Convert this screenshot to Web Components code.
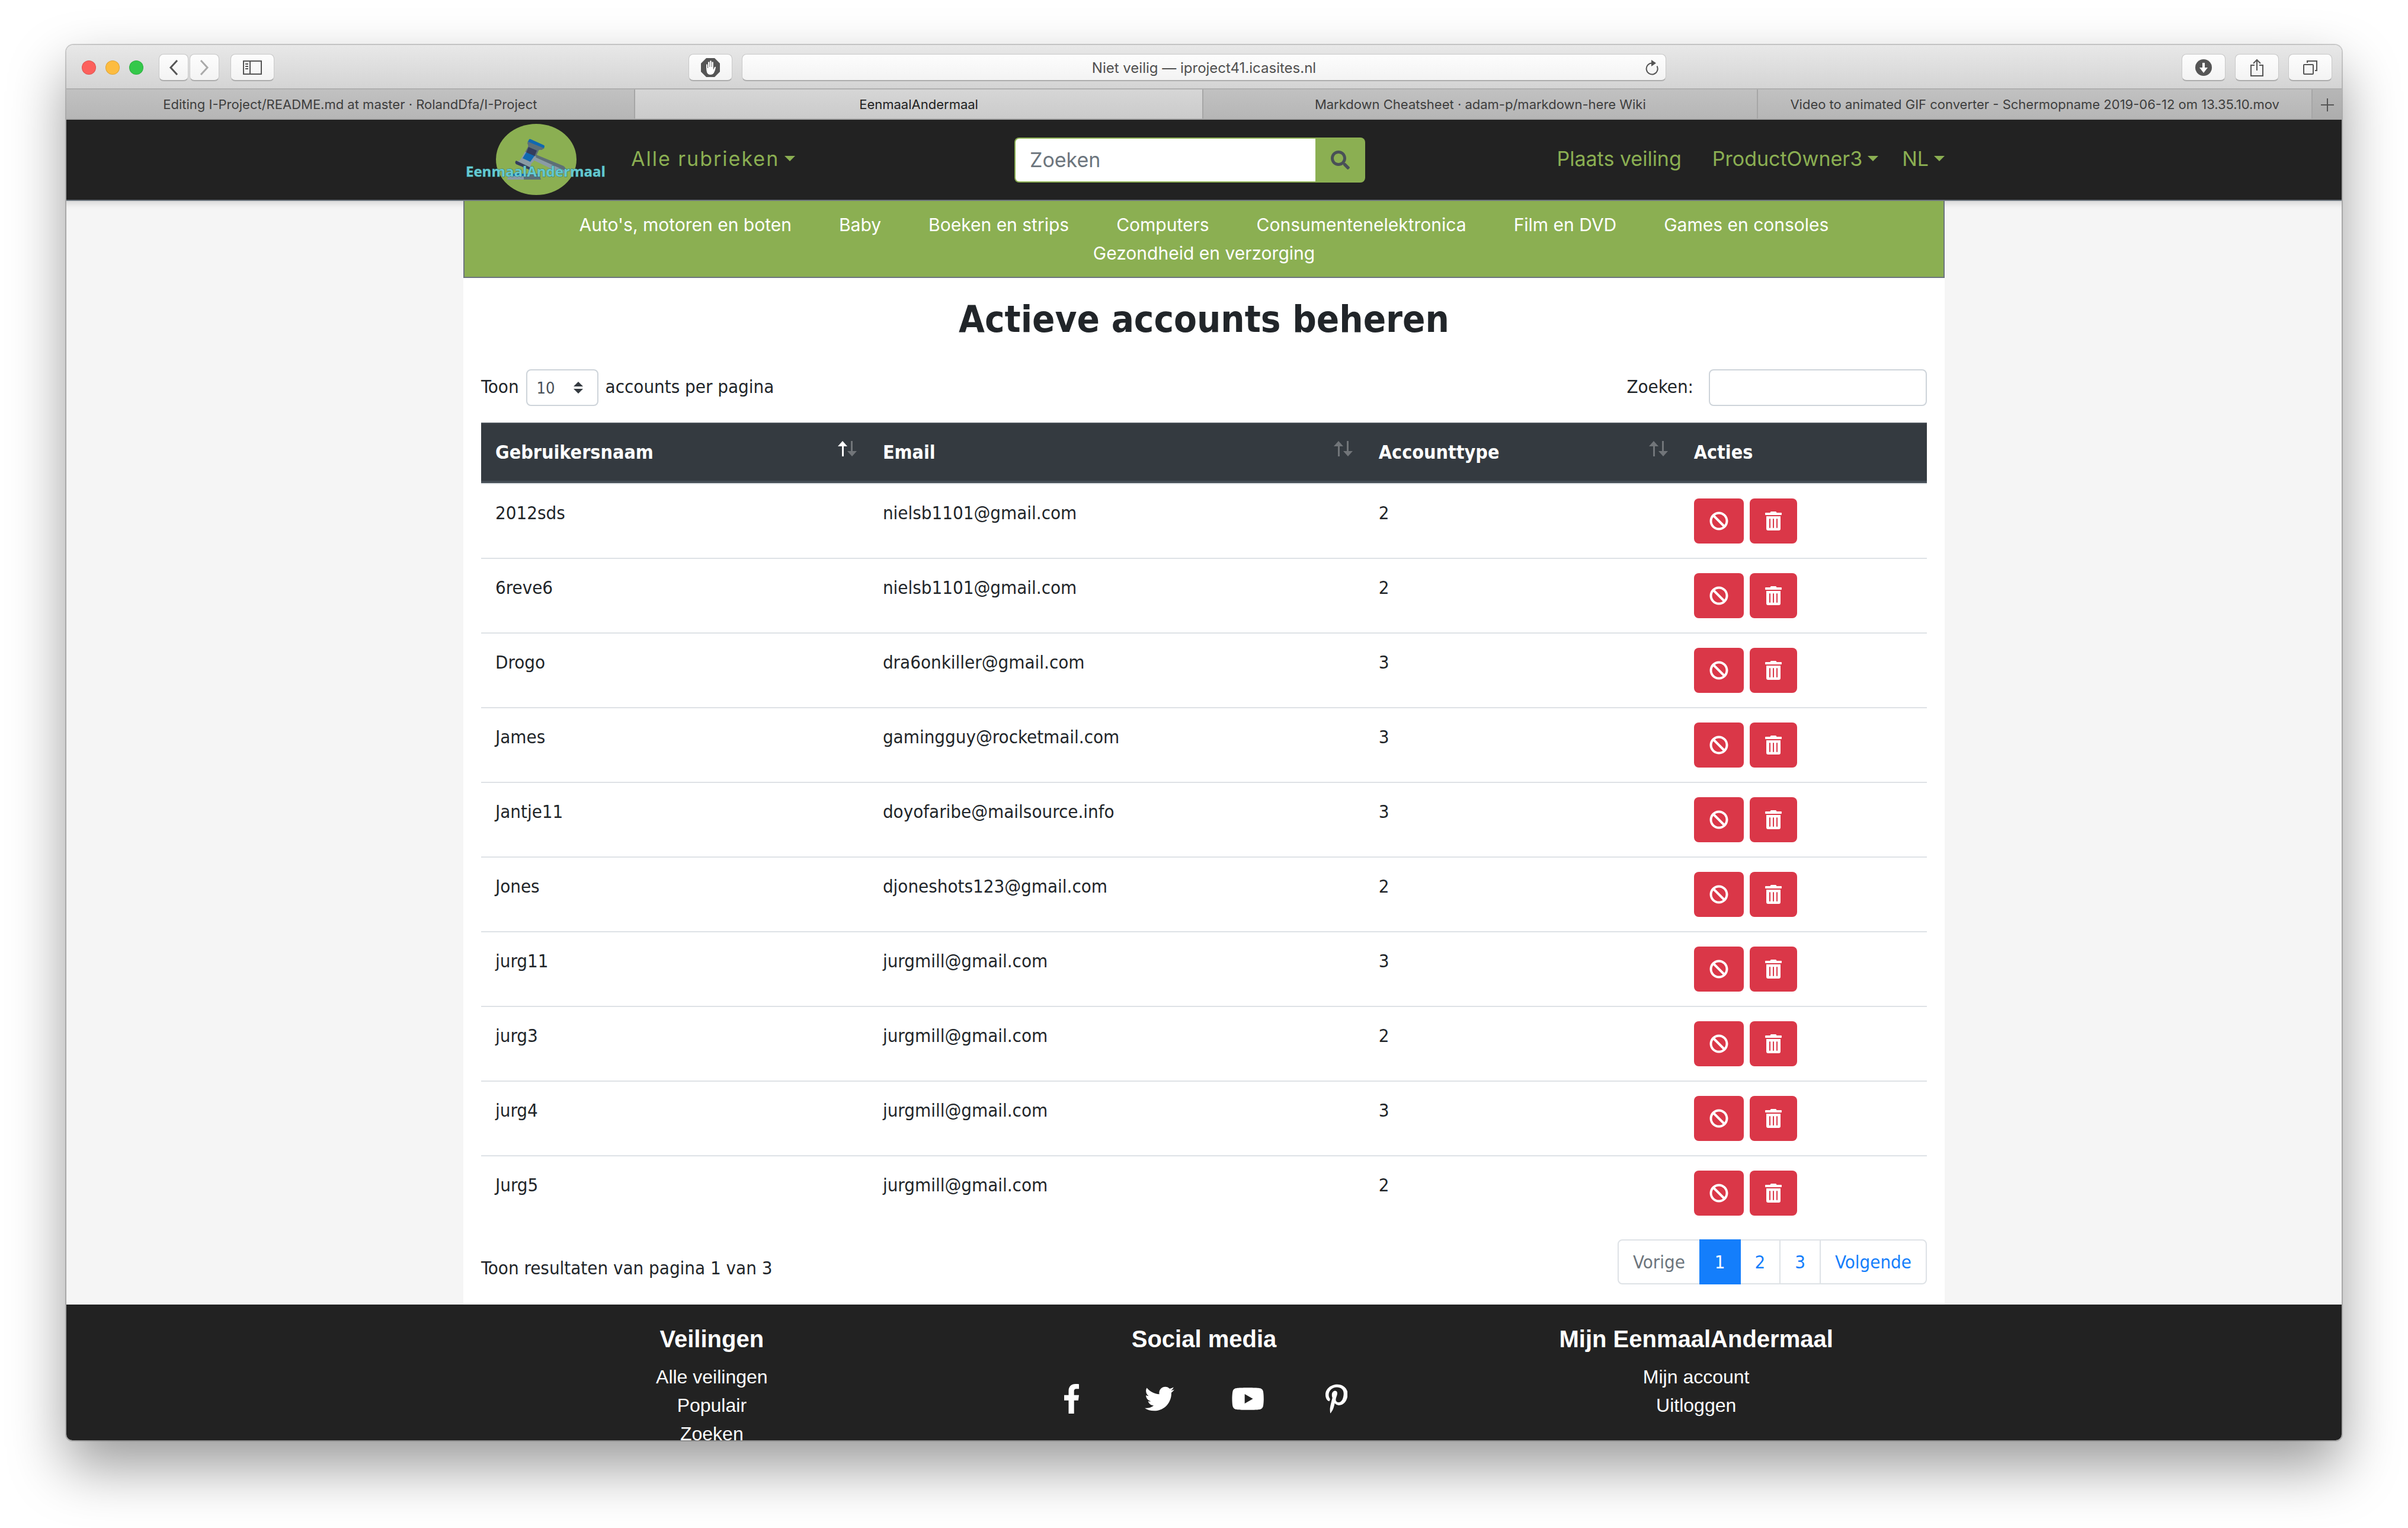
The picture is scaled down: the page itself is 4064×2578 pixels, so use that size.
<!DOCTYPE html>
<html lang="nl">
<head>
<meta charset="utf-8">
<meta name="viewport" content="width=device-width, initial-scale=1">
<title>EenmaalAndermaal</title>
<style>
  html, body { margin: 0; height: 100%; }
  body {
    box-sizing: border-box;
    display: flex;
    padding: 76px 112px 148px;
    background: #fff;
    color: #212529;
    font: 31px/48px "DejaVu Sans Condensed", "DejaVu Sans", sans-serif;
    --green: #8baf52;
    --dark: #222;
    --line: #dee2e6;
    --slate: #6c757d;
    --ui: Inter, "Open Sans", sans-serif;
  }
</style>
</head>
<body>
<browser-window>
  <browser-toolbar slot="chrome"></browser-toolbar>
  <browser-tabs slot="chrome"></browser-tabs>
  <site-header></site-header>
  <site-page>
    <rubric-nav></rubric-nav>
    <accounts-panel>
      <span slot="title">Actieve accounts beheren</span>
    </accounts-panel>
  </site-page>
  <site-footer></site-footer>
</browser-window>

<script>
const define = (name, html, setup) => {
  const template = document.createElement('template');
  template.innerHTML = html;
  customElements.define(name, class extends HTMLElement {
    constructor() {
      super();
      this.attachShadow({ mode: 'open' }).append(template.content.cloneNode(true));
      if (setup) setup(this, this.shadowRoot);
    }
  });
};

const ICONS = {
  ban: [512, 512, 'M256 8C119.034 8 8 119.033 8 256s111.034 248 248 248 248-111.034 248-248S392.967 8 256 8zm130.108 117.892c65.448 65.448 70 165.481 20.677 235.637L150.47 105.216c70.204-49.356 170.226-44.735 235.638 20.676zM125.892 386.108c-65.448-65.448-70-165.481-20.677-235.637L361.53 406.784c-70.203 49.356-170.226 44.736-235.638-20.676z'],
  trash: [448, 512, 'M32 464a48 48 0 0 0 48 48h288a48 48 0 0 0 48-48V128H32zm272-256a16 16 0 0 1 32 0v224a16 16 0 0 1-32 0zm-96 0a16 16 0 0 1 32 0v224a16 16 0 0 1-32 0zm-96 0a16 16 0 0 1 32 0v224a16 16 0 0 1-32 0zM432 32H312l-9.4-18.7A24 24 0 0 0 281.1 0H166.8a23.72 23.72 0 0 0-21.4 13.3L136 32H16A16 16 0 0 0 0 48v32a16 16 0 0 0 16 16h416a16 16 0 0 0 16-16V48a16 16 0 0 0-16-16z'],
  search: [512, 512, 'M505 442.7L405.3 343c-4.5-4.5-10.6-7-17-7H372c27.6-35.3 44-79.7 44-128C416 93.1 322.9 0 208 0S0 93.1 0 208s93.1 208 208 208c48.3 0 92.7-16.4 128-44v16.3c0 6.4 2.5 12.5 7 17l99.7 99.7c9.4 9.4 24.6 9.4 33.9 0l28.3-28.3c9.4-9.4 9.4-24.6.1-34zM208 336c-70.7 0-128-57.2-128-128 0-70.7 57.2-128 128-128 70.7 0 128 57.2 128 128 0 70.7-57.2 128-128 128z'],
  facebook: [264, 512, 'M215.8 85H264V3.6C255.7 2.5 227.1 0 193.8 0 124.3 0 76.7 42.4 76.7 120.3V192H0v91h76.7v229h94V283h73.6l11.7-91h-85.3v-62.7c0-26.3 7.3-44.3 45.1-44.3z'],
  twitter: [512, 512, 'M459.37 151.716c.325 4.548.325 9.097.325 13.645 0 138.72-105.583 298.558-298.558 298.558-59.452 0-114.68-17.219-161.137-47.106 8.447.974 16.568 1.299 25.34 1.299 49.055 0 94.213-16.568 130.274-44.832-46.132-.975-84.792-31.188-98.112-72.772 6.498.974 12.995 1.624 19.818 1.624 9.421 0 18.843-1.3 27.614-3.573-48.081-9.747-84.143-51.98-84.143-102.985v-1.299c13.969 7.797 30.214 12.67 47.431 13.319-28.264-18.843-46.781-51.005-46.781-87.391 0-19.492 5.197-37.36 14.294-52.954 51.655 63.675 129.3 105.258 216.365 109.807-1.624-7.797-2.599-15.918-2.599-24.04 0-57.828 46.782-104.934 104.934-104.934 30.213 0 57.502 12.67 76.67 33.137 23.715-4.548 46.456-13.32 66.599-25.34-7.798 24.366-24.366 44.833-46.132 57.827 21.117-2.273 41.584-8.122 60.426-16.243-14.292 20.791-32.161 39.308-52.628 54.253z'],
  youtube: [576, 512, 'M549.655 124.083c-6.281-23.65-24.787-42.276-48.284-48.597C458.781 64 288 64 288 64S117.22 64 74.629 75.486c-23.497 6.322-42.003 24.947-48.284 48.597-11.412 42.867-11.412 132.305-11.412 132.305s0 89.438 11.412 132.305c6.281 23.65 24.787 41.5 48.284 47.821C117.22 448 288 448 288 448s170.78 0 213.371-11.486c23.497-6.321 42.003-24.171 48.284-47.821 11.412-42.867 11.412-132.305 11.412-132.305s0-89.438-11.412-132.305zm-317.51 213.508V175.185l142.739 81.205-142.739 81.201z'],
  pinterest: [384, 512, 'M204 6.5C101.4 6.5 0 74.9 0 185.6 0 256 39.6 296 63.6 296c9.9 0 15.6-27.6 15.6-35.4 0-9.3-23.7-29.1-23.7-67.8 0-80.4 61.2-137.4 140.4-137.4 68.1 0 118.5 38.7 118.5 109.8 0 53.1-21.3 152.7-90.3 152.7-24.9 0-46.2-18-46.2-43.8 0-37.8 26.4-74.4 26.4-113.4 0-66.2-93.9-54.2-93.9 25.8 0 16.8 2.1 35.4 9.6 50.7-13.8 59.4-42 147.9-42 209.1 0 18.9 2.7 37.5 4.5 56.4 3.4 3.8 1.7 3.4 6.9 1.5 50.4-69 48.6-82.5 71.4-172.8 12.3 23.4 44.1 36 69.3 36 106.2 0 153.9-103.5 153.9-196.8C384 71.3 298.2 6.5 204 6.5z']
};

/* Solid glyph icon; its height is one em of the surrounding font size. */
customElements.define('glyph-icon', class extends HTMLElement {
  constructor() {
    super();
    this.attachShadow({ mode: 'open' });
  }
  connectedCallback() {
    const [w, h, d] = ICONS[this.getAttribute('name')];
    this.shadowRoot.innerHTML = `<style>
      :host { display: inline-flex; }
      svg { display: block; height: 1em; width: auto; fill: currentColor; }
    </style><svg viewBox="0 0 ${w} ${h}" aria-hidden="true"><path d="${d}"/></svg>`;
  }
});

define('browser-window', `<style>
  :host {
    flex: 1; min-width: 0; display: flex; flex-direction: column;
    border-radius: 12px 12px 10px 10px;
    box-shadow: 0 0 0 2px rgba(0,0,0,.18), 0 44px 96px rgba(0,0,0,.4);
  }
  .frame {
    flex: 1; min-height: 0; display: flex; flex-direction: column;
    overflow: hidden; border-radius: inherit;
  }
</style><div class="frame"><slot name="chrome"></slot><slot></slot></div>`);

define('browser-toolbar', `<style>
  :host {
    display: grid; grid-template-columns: 1fr auto 1fr; align-items: center;
    padding: 15px 16px 12px; border-bottom: 2px solid #afafaf;
    background: linear-gradient(#e8e8e8, #d4d4d4);
    color: #555;
  }
  .group { display: flex; align-items: center; }
  .lights { display: flex; gap: 16px; padding: 0 26px 0 10px; }
  .lights i { width: 24px; height: 24px; border-radius: 50%; box-sizing: border-box; border: 1px solid rgba(0,0,0,.12); }
  button {
    box-sizing: border-box; width: 74px; height: 46px; padding: 0; color: inherit;
    display: flex; align-items: center; justify-content: center;
    border: 1px solid #c8c8c8; border-bottom: 2px solid #adadad; border-radius: 8px;
    background: linear-gradient(#fdfdfd, #f3f3f3);
  }
  .step { width: 50px; margin-right: 2px; }
  .step + .step { margin-right: 19px; color: #aaa; }
  .middle { gap: 16px; padding-right: 90px; }
  .address { position: relative; width: 1560px; }
  input {
    box-sizing: border-box; display: block; width: 100%; height: 46px; padding: 2px 60px 0; text-align: center;
    border: 1px solid #c8c8c8; border-bottom: 2px solid #adadad; border-radius: 8px;
    background: linear-gradient(#fdfdfd, #f3f3f3);
    color: #505050; font: 24px/30px var(--ui);
  }
  .reload { position: absolute; right: 12px; top: 9px; width: 24px; height: 28px; border: 0; background: none; }
  .right { justify-content: flex-end; gap: 16px; }
  svg { display: block; fill: none; stroke: currentColor; stroke-width: 2; }
</style>
<div class="group">
  <div class="lights"><i style="background:#fc605c"></i><i style="background:#fdbc40"></i><i style="background:#34c84a"></i></div>
  <button class="step" aria-label="Terug"><svg width="16" height="26" style="stroke-width:3"><path d="M14 1 3 13l11 12"/></svg></button>
  <button class="step" aria-label="Vooruit"><svg width="16" height="26" style="stroke-width:3"><path d="M2 1l11 12L2 25"/></svg></button>
  <button aria-label="Navigatiekolom"><svg width="32" height="24"><path d="M1 1h30v22H1zM12 1v22M4 6h5M4 10h5M4 14h5"/></svg></button>
</div>
<div class="group middle">
  <button aria-label="Blokkeren"><svg width="32" height="32" style="stroke:none"><path fill="#555" d="M9 0h14l9 9v14l-9 9H9l-9-9V9z"/><path fill="#fff" d="M9 11q1-1.500 2 0v6h1V7q1.200-1.500 2.400 0v8h.8V5q1.300-1.500 2.400 0v10h.8V7q1.200-1.500 2.400 0v12h.8q.5-4 2.600-4.500 1.200.3.600 2-1 5-3 8.500-1.800 3-5.800 3-4.500 0-6-4-1-4-1-8z"/></svg></button>
  <div class="address">
    <input type="text" aria-label="Adres" value="Niet veilig — iproject41.icasites.nl">
    <button class="reload" aria-label="Herlaad"><svg width="24" height="28"><path d="M20.500 11.500a9.500 9.500 0 1 1-8.500-5"/><path fill="currentColor" stroke="none" d="M11 1l8 5.500-8 5.500z"/></svg></button>
  </div>
</div>
<div class="group right">
  <button aria-label="Downloads"><svg width="28" height="28" style="stroke:none"><circle cx="14" cy="14" r="14" fill="#555"/><path fill="#fff" d="M12 6h4v8h5l-7 9-7-9h5z"/></svg></button>
  <button aria-label="Deel"><svg width="24" height="32"><path d="M8 12H2v18h20V12h-6M12 21V3M6 9l6-6 6 6"/></svg></button>
  <button aria-label="Alle tabs"><svg width="26" height="26"><rect x="2" y="8" width="16" height="16" rx="1"/><path d="M8 5V2h16v16h-3"/></svg></button>
</div>`);

define('browser-tabs', `<style>
  :host { display: flex; height: 49px; border-bottom: 2px solid #a8a8a8; background: #b8b8b8; font: 22px/47px var(--ui); }
  button {
    min-width: 0; padding: 2px 0 0; text-align: center; color: #3e3e3e; font: inherit;
    border: 0; border-right: 2px solid #a6a6a6; background: linear-gradient(#c1c1c1, #b6b6b6);
    flex: 39 1 0;
  }
  .wide { flex-grow: 40; }
  .active { background: linear-gradient(#d6d6d6, #cbcbcb); color: #222; }
  .add { flex: 0 0 49px; border-right: 0; background: linear-gradient(#b6b6b6, #adadad); display: flex; align-items: center; justify-content: center; }
</style>
<button class="wide">Editing I-Project/README.md at master · RolandDfa/I-Project</button>
<button class="wide active">EenmaalAndermaal</button>
<button>Markdown Cheatsheet · adam-p/markdown-here Wiki</button>
<button>Video to animated GIF converter - Schermopname 2019-06-12 om 13.35.10.mov</button>
<button class="add" aria-label="Nieuwe tab"><svg width="22" height="22" stroke="#555" stroke-width="2"><path d="M11 0v22M0 11h22"/></svg></button>`);

define('site-logo', `<style>
  :host { display: block; }
  svg { display: block; overflow: visible; }
  text { font: 700 24px "Open Sans", "Noto Sans", sans-serif; fill: #64c9d1; stroke: #2f6f73; stroke-width: 1; paint-order: stroke; }
</style>
<svg width="232" height="120" viewBox="8 9 232 120" role="img" aria-label="EenmaalAndermaal">
  <ellipse cx="125" cy="69" rx="68" ry="60" fill="#8baf52"/>
  <path fill="#5d6f77" d="M125 61l46 19q5 3 3 10l-52-25z"/>
  <path fill="#8a9ba5" d="M123 65l51 23-3 5-16-6-35-17z"/>
  <path fill="#5d6f77" d="M111 38l28 12-5 3q-4-1-5 1l-5 11-18-8 5-9q1-3-1-6z"/>
  <path fill="#8a9ba5" d="M106 56l19 8-5 9q-5 3-4 8l1 2-26-11q6 0 8-4z"/>
  <path fill="#1068b1" d="M113 35q1-1 3 0l22 10q2 1 0 5l-27-11z"/>
  <path fill="#343d5d" d="M112 48l14 6-4 10-14-6zM91 71l25 12-1 4-24-10q-3-3 0-6z"/>
  <path fill="#1068b1" d="M108 57l14 6-7 10-13-6zM81 93h23v4H79z"/>
  <path fill="#8a9ba5" d="M78 97h26v6H76z"/>
  <path fill="#5d6f77" d="M104 93h26l3 10h-29z"/>
  <text x="6" y="98">EenmaalAndermaal</text>
</svg>`);

define('site-header', `<style>
  :host { display: block; background: var(--dark); border-bottom: 2px solid var(--slate); }
  nav {
    box-sizing: border-box; max-width: 2500px; height: 135px; margin: 0 auto;
    display: flex; align-items: center; font: 34px/48px var(--ui);
  }
  .side { flex: 1 1 0; min-width: 0; display: flex; align-items: center; }
  .left { gap: 45px; }
  .right { justify-content: flex-end; gap: 40px; }
  a { display: flex; align-items: center; gap: 9px; padding-bottom: 4px; color: var(--green); text-decoration: none; }
  .plain { margin-right: 12px; }
  .brand { padding: 0 0 2px 6px; }
  .menu { letter-spacing: 2px; }
  .menu::after, .drop::after {
    content: ""; border: 9px solid transparent; border-top-color: currentColor; border-bottom: 0;
  }
  form { display: flex; width: 592px; height: 76px; margin: 0 48px 0 0; }
  input {
    box-sizing: border-box; flex: 1; min-width: 0; padding: 0 24px; background: #fff;
    border: 2px solid var(--green); border-right: 0; border-radius: 8px 0 0 8px;
    font: 34px/48px var(--ui);
  }
  input::placeholder { color: var(--slate); opacity: 1; }
  form button {
    width: 84px; padding: 0; border: 0; border-radius: 0 8px 8px 0; background: var(--green);
    color: #495057; font-size: 32px; display: flex; align-items: center; justify-content: center;
  }
</style>
<nav>
  <div class="side left">
    <a class="brand" href="#"><site-logo></site-logo></a>
    <a class="menu" href="#">Alle rubrieken</a>
  </div>
  <form>
    <input type="search" placeholder="Zoeken" aria-label="Zoeken">
    <button type="button" aria-label="Zoek"><glyph-icon name="search"></glyph-icon></button>
  </form>
  <div class="side right">
    <a class="plain" href="#">Plaats veiling</a>
    <a class="drop" href="#">ProductOwner3</a>
    <a class="drop" href="#">NL</a>
  </div>
</nav>`);

define('site-page', `<style>
  :host { display: block; background: #f5f5f5; box-shadow: inset 0 12px 12px -8px rgba(0,0,0,.14); }
  main { display: block; max-width: 2500px; margin: 0 auto; background: #fff; }
</style><main><slot></slot></main>`);

define('rubric-nav', `<style>
  :host { display: block; }
  nav {
    display: flex; flex-wrap: wrap; justify-content: center; padding: 16px 0;
    border: 2px solid var(--slate); border-top: 0; background: var(--green);
    font: 30px/48px var(--ui);
  }
  a { padding: 0 40px; color: #fff; text-decoration: none; }
</style><nav></nav>`, (host, root) => {
  const nav = root.querySelector('nav');
  for (const label of ["Auto's, motoren en boten", 'Baby', 'Boeken en strips', 'Computers',
    'Consumentenelektronica', 'Film en DVD', 'Games en consoles', 'Gezondheid en verzorging']) {
    const a = document.createElement('a');
    a.href = '#';
    a.textContent = label;
    nav.append(a);
  }
});

define('accounts-table', `<style>
  :host { display: block; }
  table { width: 100%; table-layout: fixed; border-collapse: separate; border-spacing: 0; }
  .user { width: 26.8%; }
  .mail { width: 34.3%; }
  .type { width: 21.8%; }
  .act { width: 17.1%; }
  th, td { padding: 24px; text-align: left; vertical-align: top; border-top: 2px solid var(--line); }
  th {
    background: #343a40; color: #fff; border-top-color: #454d55; border-bottom: 4px solid #454d55;
    padding-right: 20px; font-size: 32px;
  }
  th div { display: flex; justify-content: space-between; }
  th button { padding: 0; border: 0; background: none; color: inherit; height: 36px; display: flex; align-items: center; }
  svg { display: block; fill: #fff; }
  .off { opacity: .3; }
  .actions { display: flex; gap: 10px; }
  td button {
    height: 76px; padding: 0 26px; border: 0; border-radius: 8px; background: #da3748; color: #fff;
    font-size: 32px; display: flex; align-items: center;
  }
</style>
<table>
  <colgroup><col class="user"><col class="mail"><col class="type"><col class="act"></colgroup>
  <thead><tr></tr></thead>
  <tbody></tbody>
</table>`, (host, root) => {
  const columns = [['Gebruikersnaam', 'up'], ['Email', 'none'], ['Accounttype', 'none'], ['Acties', null]];
  root.querySelector('thead tr').innerHTML = columns.map(([name, sort]) => `<th scope="col"><div>${name}${
    sort === null ? '' : `<button aria-label="Sorteer op ${name}"><svg width="32" height="26">
      <path class="${sort === 'up' ? '' : 'off'}" d="M8 0l8 9h-6v17H7V9H0z"/>
      <path class="off" d="M24 26l-8-9h6V0h3v17h7z"/></svg></button>`}</div></th>`).join('');
  const rows = [
    ['2012sds', 'nielsb1101@gmail.com', 2], ['6reve6', 'nielsb1101@gmail.com', 2],
    ['Drogo', 'dra6onkiller@gmail.com', 3], ['James', 'gamingguy@rocketmail.com', 3],
    ['Jantje11', 'doyofaribe@mailsource.info', 3], ['Jones', 'djoneshots123@gmail.com', 2],
    ['jurg11', 'jurgmill@gmail.com', 3], ['jurg3', 'jurgmill@gmail.com', 2],
    ['jurg4', 'jurgmill@gmail.com', 3], ['Jurg5', 'jurgmill@gmail.com', 2]
  ];
  root.querySelector('tbody').innerHTML = rows.map(([user, mail, type]) => `<tr>
    <td>${user}</td><td>${mail}</td><td>${type}</td>
    <td><div class="actions">
      <button aria-label="Blokkeer ${user}"><glyph-icon name="ban"></glyph-icon></button>
      <button aria-label="Verwijder ${user}"><glyph-icon name="trash"></glyph-icon></button>
    </div></td></tr>`).join('');
});

define('page-links', `<style>
  :host { display: block; }
  ul { display: flex; margin: 0; padding: 0 0 0 2px; list-style: none; }
  a {
    display: block; margin-left: -2px; padding: 12px 24px; border: 2px solid var(--line);
    background: #fff; color: #147efb; text-decoration: none;
  }
  li:first-child a { border-radius: 8px 0 0 8px; color: var(--slate); }
  li:last-child a { border-radius: 0 8px 8px 0; }
  li a[aria-current] { position: relative; background: #147efb; border-color: #147efb; color: #fff; }
</style>
<ul>
  <li><a href="#">Vorige</a></li>
  <li><a href="#" aria-current="page">1</a></li>
  <li><a href="#">2</a></li>
  <li><a href="#">3</a></li>
  <li><a href="#">Volgende</a></li>
</ul>`);

define('accounts-panel', `<style>
  :host { display: block; padding: 32px 30px 34px; }
  h1 { margin: 0 0 46px; text-align: center; font-size: 63px; line-height: 76px; font-weight: 700; }
  .row { display: flex; justify-content: space-between; align-items: flex-start; }
  .controls { margin-bottom: 28px; line-height: 58px; }
  label { display: flex; gap: 12px; }
  .search { gap: 26px; }
  .pick { display: grid; align-items: center; justify-items: end; }
  .pick > * { grid-area: 1 / 1; }
  .pick svg { margin-right: 26px; fill: #343a40; pointer-events: none; }
  select, input {
    box-sizing: border-box; height: 62px; border: 2px solid #ced4da; border-radius: 8px;
    background: #fff; color: #495057; font: 27px/42px "DejaVu Sans Condensed", "DejaVu Sans", sans-serif;
  }
  select { appearance: none; width: 122px; padding: 2px 0 0 16px; }
  input { width: 368px; padding: 0 16px; }
  .info { padding-top: 40px; }
  page-links { margin-top: 16px; }
</style>
<h1><slot name="title"></slot></h1>
<div class="row controls">
  <label><span>Toon</span>
    <span class="pick"><select><option>10</option><option>25</option><option>50</option><option>100</option></select>
      <svg width="16" height="20"><path d="M8 0l8 8H0zM8 20l8-8H0z"/></svg></span>
    <span>accounts per pagina</span></label>
  <label class="search"><span>Zoeken:</span><input type="search"></label>
</div>
<accounts-table></accounts-table>
<div class="row">
  <div class="info">Toon resultaten van pagina 1 van 3</div>
  <page-links></page-links>
</div>`);

define('site-footer', `<style>
  :host { display: block; flex: 1 1 0; min-height: 0; overflow: hidden; background: var(--dark); color: #fff; }
  footer {
    box-sizing: border-box; max-width: 2500px; margin: 0 auto; padding: 34px 4px;
    display: grid; grid-template-columns: repeat(3, 1fr); text-align: center;
    font: 32px/48px "Liberation Sans", Arial, sans-serif;
  }
  h2 { margin: 0 0 16px; font-size: 40px; line-height: 48px; font-weight: 700; }
  ul { margin: 0; padding: 0; list-style: none; }
  a { color: inherit; text-decoration: none; }
  .social { display: flex; justify-content: center; font-size: 50px; }
  .social a { width: 149px; height: 122px; display: flex; align-items: center; justify-content: center; }
</style>
<footer>
  <section><h2>Veilingen</h2>
    <ul><li><a href="#">Alle veilingen</a></li><li><a href="#">Populair</a></li><li><a href="#">Zoeken</a></li></ul></section>
  <section><h2>Social media</h2>
    <div class="social">
      <a href="#" aria-label="Facebook"><glyph-icon name="facebook"></glyph-icon></a>
      <a href="#" aria-label="Twitter"><glyph-icon name="twitter"></glyph-icon></a>
      <a href="#" aria-label="YouTube"><glyph-icon name="youtube"></glyph-icon></a>
      <a href="#" aria-label="Pinterest"><glyph-icon name="pinterest"></glyph-icon></a>
    </div></section>
  <section><h2>Mijn EenmaalAndermaal</h2>
    <ul><li><a href="#">Mijn account</a></li><li><a href="#">Uitloggen</a></li></ul></section>
</footer>`);
</script>
</body>
</html>
